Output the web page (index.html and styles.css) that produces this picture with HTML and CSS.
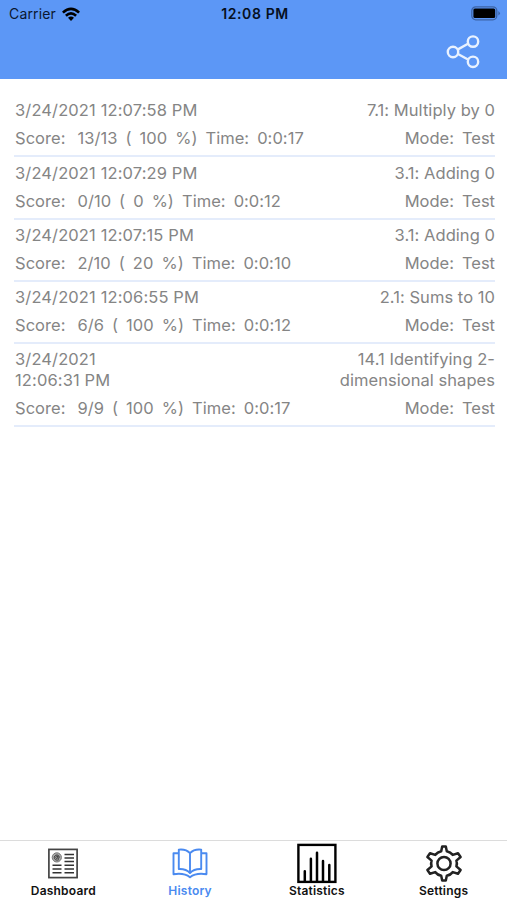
FILE: index.html
```html
<!DOCTYPE html>
<html lang="en">
<head>
    <meta charset="UTF-8">
    <meta name="viewport" content="width=device-width, initial-scale=1.0">
    <title>History</title>
    <link rel="stylesheet" href="styles.css">
</head>
<body>
    <div id="app">
        <!-- Header -->
        <header>
            <div class="status-bar">
                <div class="carrier">
                    <span>Carrier</span>
                    <svg class="wifi" viewBox="0 0 18 14">
                        <path d="M0 4.7 Q9 -3.7 18 4.7 L16.2 6.6 Q9 0 1.8 6.6Z"/>
                        <path d="M3 7.8 Q9 2.2 15 7.8 L13.2 9.7 Q9 5.9 4.8 9.7Z"/>
                        <path d="M6 10.8 Q9 8.2 12 10.8 L9 14Z"/>
                    </svg>
                </div>
                <span class="clock">12:08 PM</span>
                <svg class="battery" viewBox="0 0 30 15">
                    <rect x="0.8" y="0.8" width="25" height="13" rx="4" fill="none" stroke="#3c64a6" stroke-width="1.3"/>
                    <rect x="2.4" y="2.6" width="21.8" height="9.4" rx="1.5"/>
                    <path d="M27.4 5 Q30.4 7.3 27.4 9.6Z" fill="#3c64a6"/>
                </svg>
            </div>
            <div class="toolbar">
                <svg class="share" viewBox="0 0 34 34">
                    <path d="M11.5 14.6 L22 8.8 M11.5 18.8 L22 24.5"/>
                    <circle cx="7" cy="17" r="5.2"/>
                    <circle cx="27" cy="6.6" r="5.2"/>
                    <circle cx="27" cy="26.8" r="5.2"/>
                </svg>
            </div>
        </header>

        <!-- Test history -->
        <main>
            <div class="record">
                <div class="line"><span class="date">3/24/2021 12:07:58 PM</span><span class="topic">7.1: Multiply by 0</span></div>
                <div class="line">
                    <div class="score"><span class="label">Score:</span><span>13/13</span><span>(</span><span>100</span><span>%)</span><span>Time:</span><span>0:0:17</span></div>
                    <div class="mode"><span>Mode:</span><span>Test</span></div>
                </div>
            </div>
            <div class="record">
                <div class="line"><span class="date">3/24/2021 12:07:29 PM</span><span class="topic">3.1: Adding 0</span></div>
                <div class="line">
                    <div class="score"><span class="label">Score:</span><span>0/10</span><span>(</span><span>0</span><span>%)</span><span>Time:</span><span>0:0:12</span></div>
                    <div class="mode"><span>Mode:</span><span>Test</span></div>
                </div>
            </div>
            <div class="record">
                <div class="line"><span class="date">3/24/2021 12:07:15 PM</span><span class="topic">3.1: Adding 0</span></div>
                <div class="line">
                    <div class="score"><span class="label">Score:</span><span>2/10</span><span>(</span><span>20</span><span>%)</span><span>Time:</span><span>0:0:10</span></div>
                    <div class="mode"><span>Mode:</span><span>Test</span></div>
                </div>
            </div>
            <div class="record">
                <div class="line"><span class="date">3/24/2021 12:06:55 PM</span><span class="topic">2.1: Sums to 10</span></div>
                <div class="line">
                    <div class="score"><span class="label">Score:</span><span>6/6</span><span>(</span><span>100</span><span>%)</span><span>Time:</span><span>0:0:12</span></div>
                    <div class="mode"><span>Mode:</span><span>Test</span></div>
                </div>
            </div>
            <div class="record">
                <div class="line"><span class="date">3/24/2021<br>12:06:31 PM</span><span class="topic">14.1 Identifying 2-<br>dimensional shapes</span></div>
                <div class="line">
                    <div class="score"><span class="label">Score:</span><span>9/9</span><span>(</span><span>100</span><span>%)</span><span>Time:</span><span>0:0:17</span></div>
                    <div class="mode"><span>Mode:</span><span>Test</span></div>
                </div>
            </div>
        </main>

        <!-- Tab bar -->
        <nav>
            <a href="#">
                <svg viewBox="0 0 42 42">
                    <rect x="6.9" y="7.4" width="28.2" height="28.2" fill="#fff" stroke="#444" stroke-width="1.7"/>
                    <circle cx="14.8" cy="15.4" r="4.6" fill="#aaa" stroke="#777" stroke-width="1"/>
                    <path d="M17 17.5 C15 19 12.2 17.8 12.3 15.3 C12.6 12.2 17.2 12.2 17.2 15.2 C17.2 17 15.7 17 15.8 15.7 L16 13.8 M15.8 15 C15.5 13.5 13.8 14 13.8 15.6 C13.8 17 15.4 17 15.8 15.5" fill="none" stroke="#333" stroke-width="0.9"/>
                    <path d="M22.5 12.4H32 M22.5 16H32 M22.5 19.6H32 M10.5 23.3H19.5 M22.5 23.3H32 M10.5 27H19.5 M22.5 27H32 M10.5 30.8H19.5 M22.5 30.8H32" stroke="#333" stroke-width="1.5"/>
                </svg>
                <span>Dashboard</span>
            </a>
            <a href="#" class="active">
                <svg viewBox="0 0 42 42">
                    <g fill="none" stroke="#4a8af0" stroke-width="1.9" stroke-linejoin="round">
                        <path d="M21 11.2 C18 7.8 13.5 7.2 9.8 7.6 V27 C14 26.8 18 27.7 21 31 C24 27.7 28 26.8 32.2 27 V7.6 C28.5 7.2 24 7.8 21 11.2Z"/>
                        <path d="M21 11.2V31"/>
                        <path d="M9.8 11.2H4.5V32.2C10.5 31.2 16.5 31.6 21 35.2C25.5 31.6 31.5 31.2 37.5 32.2V11.2H32.2"/>
                    </g>
                </svg>
                <span>History</span>
            </a>
            <a href="#">
                <svg viewBox="0 0 42 42">
                    <rect x="2.4" y="2.9" width="37" height="37" fill="none" stroke="#000" stroke-width="2.4"/>
                    <path d="M8.8 39V29.3 M14.9 39V16.8 M21 39V10.8 M27 39V19 M33.3 39V23" stroke="#000" stroke-width="2.5" stroke-linecap="round"/>
                </svg>
                <span>Statistics</span>
            </a>
            <a href="#">
                <svg viewBox="0 0 42 42">
                    <g fill="none" stroke="#222" stroke-width="2.5" stroke-linejoin="round">
                        <path d="M19.2 4.4 H22.8 L23.8 9.2 Q27.5 10 29.8 12.9 L35 11.2 L37.6 15 L33.4 18.6 Q34.4 21.5 33.4 24.4 L37.6 28 L35 31.8 L29.8 30.1 Q27.5 33 23.8 33.8 L22.8 38.6 H19.2 L18.2 33.8 Q14.5 33 12.2 30.1 L7 31.8 L4.4 28 L8.6 24.4 Q7.6 21.5 8.6 18.6 L4.4 15 L7 11.2 L12.2 12.9 Q14.5 10 18.2 9.2Z"/>
                        <circle cx="21" cy="21.5" r="6.6"/>
                    </g>
                </svg>
                <span>Settings</span>
            </a>
        </nav>
    </div>
</body>
</html>
```
FILE: styles.css
```css
/* Global Styles */
body {
    margin: 0;
    font-family: 'Inter', 'Liberation Sans', sans-serif;
    background: #fff;
    color: #858585;
}

#app {
    height: 900px;
    display: flex;
    flex-direction: column;
}

/* Header */
header {
    height: 79px;
    background: #5c97f6;
    color: #0b1730;
}

.status-bar {
    display: grid;
    grid-template-columns: 1fr auto 1fr;
    align-items: center;
    height: 27px;
    padding: 0 6px 0 9px;
    font-size: 14px;
}

.carrier {
    display: flex;
    align-items: center;
    gap: 6px;
    letter-spacing: 0.15px;
}

.wifi {
    width: 18px;
    height: 14px;
}

.clock {
    color: #06101f;
    font-weight: 600;
    letter-spacing: 0.6px;
}

.battery {
    width: 30px;
    height: 15px;
    justify-self: end;
}

.toolbar {
    display: flex;
    justify-content: flex-end;
    padding: 8px 27px 0 0;
}

.share {
    width: 34px;
    height: 34px;
    fill: none;
    stroke: #e9f2ff;
    stroke-width: 2.4;
}

/* History list */
main {
    flex: 1;
    padding: 16px 12px 0 14px;
    font-size: 16.5px;
    line-height: 20.6px;
}

.record {
    display: flex;
    flex-direction: column;
    gap: 7.4px;
    padding: 5.3px 0 6.4px 1px;
    border-bottom: 2px solid #e4ecfb;
}

.line {
    display: flex;
    justify-content: space-between;
}

.date {
    letter-spacing: 0.12px;
}

.topic {
    text-align: right;
    letter-spacing: 0.05px;
}

.score, .mode {
    display: flex;
    gap: 8px;
}

.score {
    letter-spacing: 0.04px;
}

.label {
    margin-right: 4px;
}

/* Tab bar */
nav {
    display: flex;
    height: 59px;
    border-top: 1px solid #dcdcdc;
}

nav a {
    flex: 1;
    display: flex;
    flex-direction: column;
    align-items: center;
    color: #111;
    text-decoration: none;
    font-size: 12px;
    font-weight: 600;
    line-height: 16px;
    letter-spacing: 0.2px;
}

nav a.active {
    color: #4a8af0;
}

nav svg {
    width: 42px;
    height: 42px;
    margin-top: 1px;
    margin-bottom: -1px;
}
```
